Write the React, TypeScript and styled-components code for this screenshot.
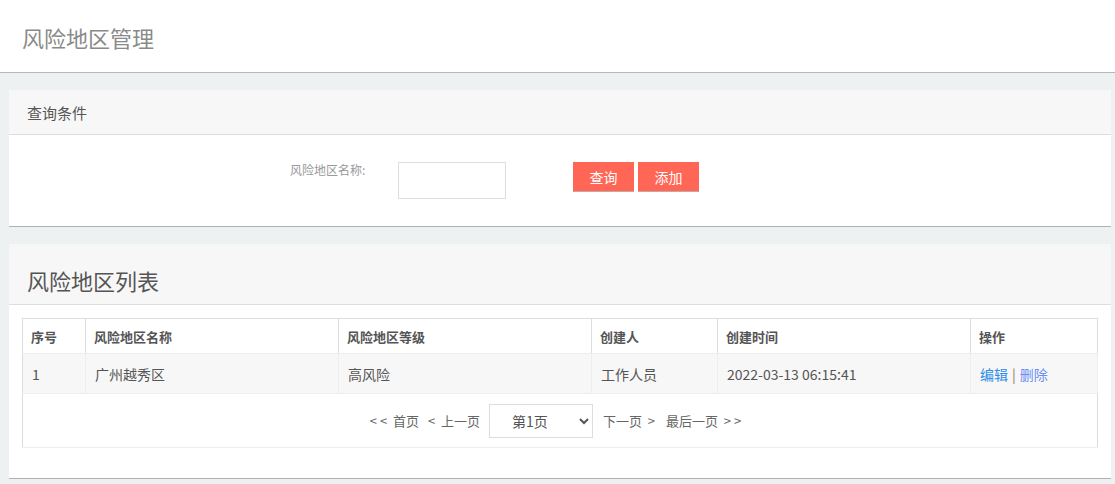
import styled, { createGlobalStyle } from "styled-components";

const GlobalStyle = createGlobalStyle`
  body {
    margin: 0;
    background: #eef1f1;
    font-family: "Noto Sans CJK SC", "Liberation Sans", sans-serif;
  }
`;

const Header = styled.div`
  height: 73px;
  background: #fff;
  border-bottom: 1px solid #b4b8b9;
  display: flex;
  align-items: center;
  padding-left: 22px;
  box-sizing: border-box;
`;

const Title = styled.h1`
  margin: 0;
  font-size: 22px;
  font-weight: normal;
  color: #8a8a8a;
  line-height: 30px;
  margin-top: 2px;
`;

const Content = styled.div`
  padding: 17px 4px 0 9px;
  display: flex;
  flex-direction: column;
  gap: 17px;
`;

const Panel = styled.section`
  background: #fff;
  border-bottom: 1px solid #aeb2b3;
`;

const PanelHead = styled.div<{ $tall?: boolean }>`
  height: ${(p) => (p.$tall ? 61 : 45)}px;
  background: #f7f7f7;
  border-bottom: 1px solid #dddddd;
  display: flex;
  align-items: center;
  padding-left: 18px;
  font-size: ${(p) => (p.$tall ? 22 : 15)}px;
  color: #555;
  line-height: 1;
  padding-top: ${(p) => (p.$tall ? 12 : 0)}px;
  box-sizing: border-box;
`;

const QueryBody = styled.div`
  height: 91px;
  box-sizing: border-box;
  padding: 27px 0 0 281px;
  display: flex;
  align-items: flex-start;
`;

const Label = styled.label`
  width: 108px;
  font-size: 12px;
  color: #999;
  line-height: 16px;
`;

const TextInput = styled.input`
  width: 108px;
  height: 37px;
  box-sizing: border-box;
  border: 1px solid #dddddd;
  outline: none;
  margin-right: 67px;
`;

const Buttons = styled.div`
  display: flex;
  gap: 4px;
`;

const Button = styled.button`
  width: 61px;
  height: 30px;
  border: none;
  border-bottom: 1px solid #c4a8a4;
  background: #ff6655;
  color: #fff;
  font-family: inherit;
  font-size: 14px;
  padding: 0;
  cursor: pointer;
`;

const ListBody = styled.div`
  padding: 13px 14px 30px 13px;
`;

const Table = styled.table`
  width: 100%;
  border-collapse: collapse;
  border: 1px solid #dddddd;
  table-layout: fixed;
`;

const Th = styled.th<{ $w: number }>`
  width: ${(p) => p.$w}px;
  height: 35px;
  box-sizing: border-box;
  text-align: left;
  padding: 0 8px;
  font-size: 13px;
  font-weight: bold;
  color: #555;
  border-right: 1px solid #dddddd;
  border-bottom: 1px solid #eeeeee;
`;

const DataRow = styled.tr`
  background: #f7f7f7;
`;

const Td = styled.td`
  height: 40px;
  box-sizing: border-box;
  padding: 0 9px;
  font-size: 14px;
  color: #555;
  border-right: 1px solid #eeeeee;
`;

const PagerCell = styled.td`
  height: 54px;
  box-sizing: border-box;
  padding: 0;
  border-top: 1px solid #eeeeee;
  border-bottom: 1px solid #eeeeee;
`;

const Pager = styled.div`
  display: flex;
  align-items: center;
  justify-content: center;
  font-size: 13px;
  color: #666;
  padding-right: 9px;
`;

const PageLink = styled.a<{ $gap?: number }>`
  color: #666;
  text-decoration: none;
  margin-right: ${(p) => p.$gap ?? 9}px;
  white-space: pre;
  cursor: pointer;
`;

const PageSelect = styled.select`
  width: 104px;
  height: 34px;
  border: 1px solid #dddddd;
  background: #fff;
  color: #555;
  font-family: inherit;
  font-size: 14px;
  padding-left: 18px;
  margin-right: 10px;
  outline: none;
`;

const Action = styled.a<{ $soft?: boolean }>`
  color: ${(p) => (p.$soft ? "#6a8ef2" : "#2e8be8")};
  text-decoration: none;
  cursor: pointer;
`;

const Sep = styled.span`
  color: #9c7660;
  margin: 0 4px;
`;

const columns = [
  { title: "序号", w: 63 },
  { title: "风险地区名称", w: 253 },
  { title: "风险地区等级", w: 253 },
  { title: "创建人", w: 126 },
  { title: "创建时间", w: 253 },
  { title: "操作", w: 127 },
];

export default function App() {
  return (
    <>
      <GlobalStyle />
      <Header>
        <Title>风险地区管理</Title>
      </Header>
      <Content>
        <Panel>
          <PanelHead>查询条件</PanelHead>
          <QueryBody>
            <Label>风险地区名称:</Label>
            <TextInput type="text" />
            <Buttons>
              <Button>查询</Button>
              <Button>添加</Button>
            </Buttons>
          </QueryBody>
        </Panel>
        <Panel>
          <PanelHead $tall>风险地区列表</PanelHead>
          <ListBody>
            <Table>
              <thead>
                <tr>
                  {columns.map((c) => (
                    <Th key={c.title} $w={c.w}>
                      {c.title}
                    </Th>
                  ))}
                </tr>
              </thead>
              <tbody>
                <DataRow>
                  <Td>1</Td>
                  <Td>广州越秀区</Td>
                  <Td>高风险</Td>
                  <Td>工作人员</Td>
                  <Td>2022-03-13 06:15:41</Td>
                  <Td>
                    <Action>编辑</Action>
                    <Sep>|</Sep>
                    <Action $soft>删除</Action>
                  </Td>
                </DataRow>
                <tr>
                  <PagerCell colSpan={6}>
                    <Pager>
                      <PageLink>{"< <  首页"}</PageLink>
                      <PageLink>{"<  上一页"}</PageLink>
                      <PageSelect defaultValue="1">
                        <option value="1">第1页</option>
                      </PageSelect>
                      <PageLink $gap={11}>{"下一页  >"}</PageLink>
                      <PageLink $gap={0}>{"最后一页  > >"}</PageLink>
                    </Pager>
                  </PagerCell>
                </tr>
              </tbody>
            </Table>
          </ListBody>
        </Panel>
      </Content>
    </>
  );
}
